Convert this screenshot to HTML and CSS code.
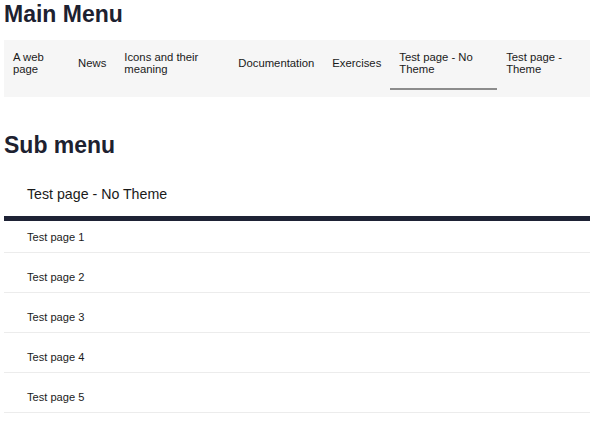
FILE: index.html
```html
<!DOCTYPE html>
<html lang="en">
<head>
<meta charset="utf-8">
<title>Menus</title>
<link rel="stylesheet" href="styles.css">
</head>
<body>
<div class="page">
  <h1 class="title">Main Menu</h1>
  <nav class="main-nav">
    <ul class="main-nav__list">
      <li class="main-nav__item"><a href="#">A web page</a></li>
      <li class="main-nav__item"><a href="#">News</a></li>
      <li class="main-nav__item"><a href="#">Icons and their meaning</a></li>
      <li class="main-nav__item"><a href="#">Documentation</a></li>
      <li class="main-nav__item"><a href="#">Exercises</a></li>
      <li class="main-nav__item main-nav__item--active"><a href="#">Test page - No Theme</a></li>
      <li class="main-nav__item"><a href="#">Test page - Theme</a></li>
    </ul>
  </nav>
  <h2 class="title title--sub">Sub menu</h2>
  <div class="sub-nav">
    <div class="sub-nav__header">Test page - No Theme</div>
    <ul class="sub-nav__list">
      <li class="sub-nav__item"><a href="#">Test page 1</a></li>
      <li class="sub-nav__item"><a href="#">Test page 2</a></li>
      <li class="sub-nav__item"><a href="#">Test page 3</a></li>
      <li class="sub-nav__item"><a href="#">Test page 4</a></li>
      <li class="sub-nav__item"><a href="#">Test page 5</a></li>
    </ul>
  </div>
</div>
</body>
</html>
```

FILE: styles.css
```css
html, body {
  margin: 0;
  padding: 0;
  background: #ffffff;
}

body {
  font-family: "Liberation Sans", Arial, Helvetica, sans-serif;
  color: #1a1a1a;
}

.page {
  width: 586px;
  margin: 0 0 0 4px;
}

a {
  color: inherit;
  text-decoration: none;
}

ul {
  list-style: none;
  margin: 0;
  padding: 0;
}

.title {
  margin: 1px 0 13px;
  font-size: 23px;
  line-height: 26px;
  font-weight: 700;
  color: #1d2130;
}

.title--sub {
  margin: 35px 0 0;
}

/* Main navigation */
.main-nav {
  background: #f6f6f6;
  padding-bottom: 7px;
}

.main-nav__list {
  display: flex;
}

.main-nav__item {
  display: flex;
  align-items: center;
  padding: 10.5px 9px 12px;
  border-bottom: 2px solid transparent;
  font-size: 11.3px;
  line-height: 12.6px;
  color: #1a1a1a;
}

.main-nav__item--active {
  border-bottom-color: #8c8c8c;
}

/* Sub navigation */
.sub-nav__header {
  padding: 28px 0 13px 23px;
  font-size: 14.2px;
  line-height: 17px;
  color: #1a1a1a;
  border-bottom: 5px solid #1e2235;
}

.sub-nav__item {
  padding: 18px 0 8px 23px;
  font-size: 11.1px;
  line-height: 13px;
  color: #1a1a1a;
  border-bottom: 1px solid #ececec;
}

.sub-nav__item:first-child {
  padding-top: 10px;
}
```
